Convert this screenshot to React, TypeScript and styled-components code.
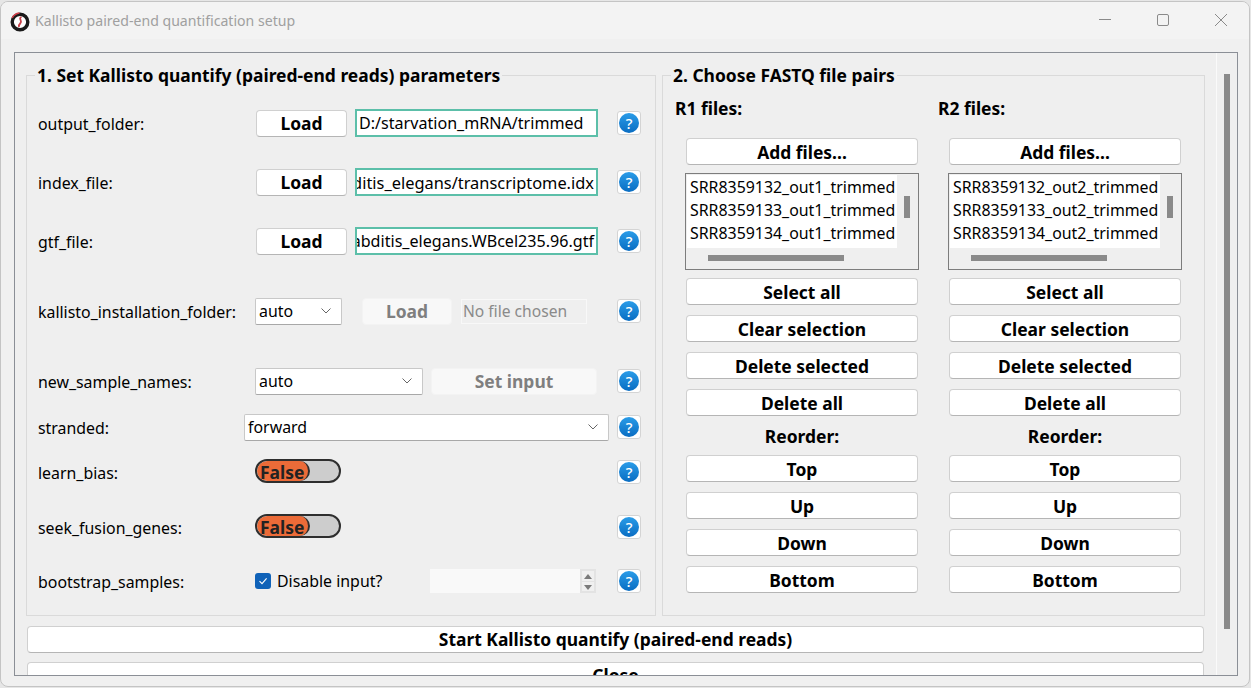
import React from "react";
import styled, { createGlobalStyle } from "styled-components";

const GlobalStyle = createGlobalStyle`
  html, body {
    margin: 0;
    padding: 0;
    background: #e6e6e6;
    overflow: hidden;
  }
  * {
    box-sizing: border-box;
  }
`;

const Chevron = () => (
  <ChevronSvg viewBox="0 0 10 6">
    <path d="M0.5 0.5 L5 5 L9.5 0.5" fill="none" stroke="#666" strokeWidth="1" />
  </ChevronSvg>
);

const Help = () => (
  <HelpButton>
    <HelpDot>?</HelpDot>
  </HelpButton>
);

const Logo = () => (
  <svg width="20" height="20" viewBox="0 0 20 20">
    <circle cx="10" cy="10" r="7.8" fill="#fff" stroke="#1a1a1a" strokeWidth="3.4" />
    <path d="M2.2 6 C3.6 3 6 1.4 9.5 1" fill="none" stroke="#d2404a" strokeWidth="1.5" />
    <path d="M11.5 5 C8 6.5 12.5 8.5 10.5 11 C9 12.5 8.5 13.5 9 15" fill="none" stroke="#c8424a" strokeWidth="1.8" />
  </svg>
);

const Toggle = () => (
  <Track>
    <Thumb>False</Thumb>
  </Track>
);

const FileColumn = ({ title, tag }: { title: string; tag: string }) => (
  <Column>
    <ColumnTitle>{title}</ColumnTitle>
    <ColumnBody>
      <WideButton>Add files...</WideButton>
      <ListBox>
        <ListItems>
          <div>SRR8359132_{tag}_trimmed</div>
          <div>SRR8359133_{tag}_trimmed</div>
          <div>SRR8359134_{tag}_trimmed</div>
        </ListItems>
        <VThumb />
        <HThumb />
      </ListBox>
      <WideButton>Select all</WideButton>
      <WideButton>Clear selection</WideButton>
      <WideButton>Delete selected</WideButton>
      <WideButton>Delete all</WideButton>
      <ReorderLabel>Reorder:</ReorderLabel>
      <WideButton>Top</WideButton>
      <WideButton>Up</WideButton>
      <WideButton>Down</WideButton>
      <WideButton>Bottom</WideButton>
    </ColumnBody>
  </Column>
);

export default function App() {
  return (
    <>
      <GlobalStyle />
      <Window>
        <TitleBar>
          <Logo />
          <WindowTitle>Kallisto paired-end quantification setup</WindowTitle>
          <WindowControls>
            <svg width="12" height="12" viewBox="0 0 12 12">
              <path d="M0 5.5 H12" stroke="#8a8a8a" strokeWidth="1" />
            </svg>
            <svg width="12" height="12" viewBox="0 0 12 12">
              <rect x="0.5" y="0.5" width="11" height="11" rx="1.5" fill="none" stroke="#8a8a8a" strokeWidth="1" />
            </svg>
            <svg width="12" height="12" viewBox="0 0 12 12">
              <path d="M0 0 L12 12 M12 0 L0 12" stroke="#8a8a8a" strokeWidth="1" />
            </svg>
          </WindowControls>
        </TitleBar>
        <ScrollFrame>
          <Content>
            <Panels>
              <LeftGroup>
                <GroupTitle>1. Set Kallisto quantify (paired-end reads) parameters</GroupTitle>
                <Row $gap={23}>
                  <Label>output_folder:</Label>
                  <LoadButton>Load</LoadButton>
                  <PathInput>D:/starvation_mRNA/trimmed</PathInput>
                  <Help />
                </Row>
                <Row $gap={31}>
                  <Label>index_file:</Label>
                  <LoadButton>Load</LoadButton>
                  <PathInput $alignEnd $size={16.4}>
                    /Caenorhabditis_elegans/transcriptome.idx
                  </PathInput>
                  <Help />
                </Row>
                <Row $gap={31}>
                  <Label>gtf_file:</Label>
                  <LoadButton>Load</LoadButton>
                  <PathInput $alignEnd>Caenorhabditis_elegans.WBcel235.96.gtf</PathInput>
                  <Help />
                </Row>
                <Row $gap={42}>
                  <Label>kallisto_installation_folder:</Label>
                  <Select $width={87}>
                    auto
                    <Chevron />
                  </Select>
                  <DisabledLoad>Load</DisabledLoad>
                  <NoFile>No file chosen</NoFile>
                  <Help />
                </Row>
                <Row $gap={42}>
                  <Label>new_sample_names:</Label>
                  <Select $width={168}>
                    auto
                    <Chevron />
                  </Select>
                  <SetInput>Set input</SetInput>
                  <Help />
                </Row>
                <Row $gap={18}>
                  <ShortLabel>stranded:</ShortLabel>
                  <Select $width={365}>
                    forward
                    <Chevron />
                  </Select>
                  <Help />
                </Row>
                <Row $gap={17}>
                  <Label>learn_bias:</Label>
                  <Toggle />
                  <Help />
                </Row>
                <Row $gap={27}>
                  <Label>seek_fusion_genes:</Label>
                  <Toggle />
                  <Help />
                </Row>
                <Row $gap={26}>
                  <Label>bootstrap_samples:</Label>
                  <CheckBox>
                    <svg width="10" height="10" viewBox="0 0 10 10">
                      <path d="M1.5 5.2 L4 7.6 L8.6 2.4" fill="none" stroke="#fff" strokeWidth="1.1" />
                    </svg>
                  </CheckBox>
                  <CheckLabel>Disable input?</CheckLabel>
                  <SpinBox>
                    <SpinButtons>
                      <SpinArrow $up />
                      <SpinArrow />
                    </SpinButtons>
                  </SpinBox>
                  <Help />
                </Row>
              </LeftGroup>
              <RightGroup>
                <GroupTitle>2. Choose FASTQ file pairs</GroupTitle>
                <Columns>
                  <FileColumn title="R1 files:" tag="out1" />
                  <FileColumn title="R2 files:" tag="out2" />
                </Columns>
              </RightGroup>
            </Panels>
            <FooterButton $top={10}>Start Kallisto quantify (paired-end reads)</FooterButton>
            <FooterButton $top={9}>Close</FooterButton>
          </Content>
          <ScrollGutter>
            <ScrollThumb />
          </ScrollGutter>
        </ScrollFrame>
      </Window>
    </>
  );
}

const uiFont = `"Noto Sans", "Open Sans", sans-serif`;
const boldSize = "17.45px";

const Window = styled.div`
  width: 1250px;
  height: 686px;
  margin-top: 1px;
  background: #f0f0f0;
  border-radius: 8px;
  border: 1px solid #c4c4c4;
  overflow: hidden;
  font-family: ${uiFont};
  font-size: 15.9px;
  color: #000;
`;

const TitleBar = styled.div`
  height: 37px;
  padding-left: 30px;
  padding-right: 22px;
  display: flex;
  align-items: center;
  background: #f3f3f3;
  position: relative;

  & > svg:first-child {
    position: absolute;
    left: 9px;
    top: 10px;
  }
`;

const WindowTitle = styled.div`
  margin-left: 4px;
  font-size: 14.1px;
  color: #a0a0a0;
`;

const WindowControls = styled.div`
  margin-left: auto;
  display: flex;
  align-items: center;
  gap: 46px;
  margin-top: -2px;
`;

const ScrollFrame = styled.div`
  margin: 13px 0 0 13px;
  width: 1224px;
  height: 624px;
  border: 1px solid #8b8f96;
  display: flex;
  overflow: hidden;
  background: #efefef;
`;

const Content = styled.div`
  width: 1201px;
  padding: 11px 0 0 11px;
  flex-shrink: 0;
`;

const Panels = styled.div`
  display: flex;
  gap: 6px;
`;

const GroupBox = styled.fieldset`
  margin: 0;
  padding: 0;
  min-width: 0;
  height: 552px;
  border: 1px solid #dadada;
`;

const LeftGroup = styled(GroupBox)`
  width: 630px;
`;

const RightGroup = styled(GroupBox)`
  width: 543px;
`;

const GroupTitle = styled.legend`
  margin-left: 8px;
  padding: 0 2px;
  font-size: ${boldSize};
  line-height: 22px;
  font-weight: 700;
`;

const Row = styled.div<{ $gap: number }>`
  height: 28px;
  margin-top: ${(p) => p.$gap}px;
  padding-left: 11px;
  padding-right: 14px;
  display: flex;
  align-items: center;
`;

const Label = styled.div`
  width: 217px;
  flex-shrink: 0;
  white-space: nowrap;
  padding-top: 1px;
`;

const ShortLabel = styled(Label)`
  width: 206px;
`;

const BaseButton = styled.button`
  height: 27px;
  padding: 0;
  background: #fff;
  border: 1px solid #d0d0d0;
  border-bottom-color: #b5b5b5;
  border-radius: 4px;
  font-family: ${uiFont};
  font-size: ${boldSize};
  line-height: 25px;
  font-weight: 700;
  color: #000;
`;

const LoadButton = styled(BaseButton)`
  width: 91px;
  margin-left: 1px;
`;

const PathInput = styled.div<{ $alignEnd?: boolean; $size?: number }>`
  width: 243px;
  height: 28px;
  margin-left: 8px;
  padding: 0 2px;
  display: flex;
  align-items: center;
  justify-content: ${(p) => (p.$alignEnd ? "flex-end" : "flex-start")};
  background: #fff;
  border: 2px solid #5cbfa9;
  font-size: ${(p) => p.$size ?? 16.1}px;
  overflow: hidden;
  white-space: nowrap;
`;

const HelpButton = styled.div`
  width: 24px;
  height: 24px;
  margin-left: auto;
  display: flex;
  align-items: center;
  justify-content: center;
  background: #fff;
  border: 1px solid #d4d4d4;
  border-radius: 3px;
`;

const HelpDot = styled.div`
  width: 20px;
  height: 20px;
  border-radius: 50%;
  background: linear-gradient(180deg, #2a9ce8 0%, #0a6dc2 100%);
  color: #fff;
  font-size: 15px;
  font-weight: 500;
  line-height: 20px;
  text-align: center;
`;

const Select = styled.div<{ $width: number }>`
  width: ${(p) => p.$width}px;
  height: 27px;
  padding: 0 10px 0 3px;
  display: flex;
  align-items: center;
  justify-content: space-between;
  flex-shrink: 0;
  background: #fff;
  border: 1px solid #c8c8c8;
  border-bottom-color: #a8a8a8;
  border-radius: 2px;
`;

const ChevronSvg = styled.svg`
  width: 10px;
  height: 6px;
`;

const DisabledLoad = styled(BaseButton)`
  width: 90px;
  margin-left: 20px;
  background: #f8f8f8;
  border-color: #f3f3f3;
  color: #7f7f7f;
`;

const NoFile = styled.div`
  width: 126px;
  height: 25px;
  margin-left: 9px;
  padding: 0 1px;
  display: flex;
  align-items: center;
  background: #efefef;
  border: 1px solid #f8f8f8;
  font-size: 15.6px;
  color: #8a8a8a;
`;

const SetInput = styled(BaseButton)`
  width: 166px;
  margin-left: 8px;
  background: #f8f8f8;
  border-color: #f3f3f3;
  color: #7f7f7f;
`;

const Track = styled.div`
  width: 86px;
  height: 24px;
  margin-bottom: 2px;
  background: #cdcdcd;
  border: 2px solid #2e2e2e;
  border-radius: 12px;
  overflow: hidden;
`;

const Thumb = styled.div`
  width: 53px;
  height: 20px;
  padding-left: 3px;
  background: #ec6b38;
  border-right: 2px solid #2e2e2e;
  border-radius: 10px;
  color: #222;
  font-size: ${boldSize};
  font-weight: 700;
  line-height: 22px;
`;

const CheckBox = styled.div`
  width: 16px;
  height: 16px;
  display: flex;
  align-items: center;
  justify-content: center;
  background: #0f62b8;
  border-radius: 3px;
`;

const CheckLabel = styled.div`
  margin-left: 6px;
  width: 153px;
`;

const SpinBox = styled.div`
  width: 166px;
  height: 24px;
  display: flex;
  justify-content: flex-end;
  background: #f9f9f9;
`;

const SpinButtons = styled.div`
  width: 16px;
  display: flex;
  flex-direction: column;
  gap: 1px;
  border: 2px solid #e3e3e3;
  background: #e3e3e3;
`;

const SpinArrow = styled.div<{ $up?: boolean }>`
  flex: 1;
  position: relative;
  background: #f0f0f0;

  &::after {
    content: "";
    position: absolute;
    left: 2px;
    top: 3px;
    border-left: 4px solid transparent;
    border-right: 4px solid transparent;
    ${(p) => (p.$up ? "border-bottom: 5px solid #7a7a7a;" : "border-top: 5px solid #7a7a7a;")}
  }
`;

const Columns = styled.div`
  display: flex;
  padding: 11px 0 0 12px;
`;

const Column = styled.div`
  width: 263px;
  flex-shrink: 0;
`;

const ColumnTitle = styled.div`
  height: 23px;
  font-size: ${boldSize};
  line-height: 22px;
  font-weight: 700;
`;

const ColumnBody = styled.div`
  width: 234px;
  margin: 18px 0 0 10px;
  display: flex;
  flex-direction: column;
  gap: 10px;
  align-items: center;
`;

const WideButton = styled(BaseButton)`
  width: 232px;
  flex-shrink: 0;
  padding-top: 1px;
`;

const ListBox = styled.div`
  position: relative;
  width: 234px;
  height: 97px;
  margin: -2px 0;
  padding: 1px;
  background: #efefef;
  border: 1px solid #7d7d7d;
`;

const ListItems = styled.div`
  width: 210px;
  height: 73px;
  padding: 1px 0 0 3px;
  background: #fff;
  line-height: 23px;
  white-space: nowrap;
  overflow: hidden;
`;

const VThumb = styled.div`
  position: absolute;
  left: 218px;
  top: 22px;
  width: 6px;
  height: 22px;
  background: #8a8a8a;
`;

const HThumb = styled.div`
  position: absolute;
  left: 22px;
  top: 81px;
  width: 136px;
  height: 6px;
  background: #8a8a8a;
`;

const ReorderLabel = styled.div`
  height: 19px;
  font-weight: 700;
  font-size: ${boldSize};
  line-height: 21px;
`;

const FooterButton = styled(BaseButton)<{ $top: number }>`
  display: block;
  width: 1177px;
  margin-top: ${(p) => p.$top}px;
  margin-left: 1px;
`;

const ScrollGutter = styled.div`
  flex: 1;
  padding: 21px 0 0 7px;
  border-left: 1px solid #fafafa;
`;

const ScrollThumb = styled.div`
  width: 6px;
  height: 555px;
  background: #8a8a8a;
`;
